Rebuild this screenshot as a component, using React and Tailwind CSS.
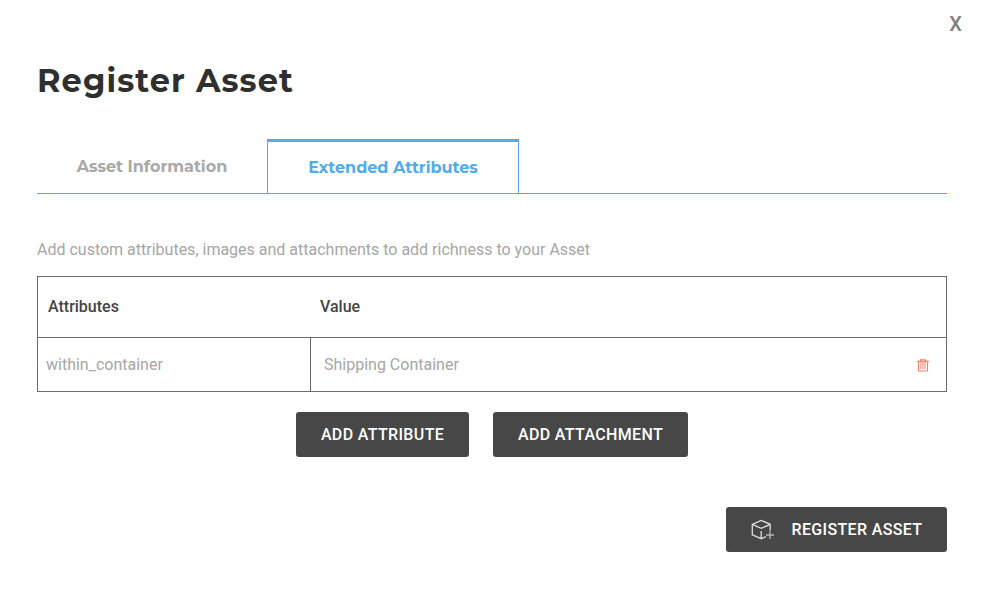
function TrashIcon() {
  return (
    <svg width="12" height="13" viewBox="0 0 12 13" fill="none" stroke="#f0806a" aria-hidden="true">
      <path d="M3.5 2V.8h5V2" strokeWidth="1.2" />
      <path d="M.3 2.6h11.4" strokeWidth="1.9" stroke="#f28c76" />
      <path d="M1.5 3.5v8.5h9V3.5" strokeWidth="1.1" />
      <path d="M3.9 4v6M6 4v6M8.1 4v6" strokeWidth="1" />
    </svg>
  );
}

function AddCubeIcon() {
  return (
    <svg width="24" height="22" viewBox="0 0 24 22" fill="none" stroke="#dedede" strokeWidth="1.3" aria-hidden="true">
      <path d="M19.2 11.5V5.3L10.2 1.4 1.3 5.3v10.5l8.9 3.9 4.8-2.1M1.3 5.3l8.9 4.1 9-4.1M10.2 12v7.7" />
      <path d="M19 12v8M15 16h8" stroke="#b8b8b8" />
    </svg>
  );
}

const buttonClass =
  "flex h-[45px] items-center justify-center rounded-[3px] bg-[#474747] text-base font-medium text-white";

export default function App() {
  return (
    <main className="flex h-[589px] w-[984px] flex-col bg-white px-[37px] font-['Roboto',sans-serif] text-[#444]">
      <header>
        <div className="-mr-[15px] flex h-[61px] justify-end pt-[9px]">
          <button className="h-[30px] text-xl leading-[30px] font-medium text-[#808080]" aria-label="Close">X</button>
        </div>
        <h1 className="w-fit font-['Montserrat',sans-serif] text-[32px] leading-10 font-bold tracking-[1.1px] text-[#2f2f2f]">
          Register Asset
        </h1>
      </header>

      <nav className="mt-[38px] flex h-[55px] border-b border-[#4facea] font-['Montserrat',sans-serif] text-base font-bold">
        <button className="w-[230px] pt-[2px] text-[#a8a8a8]">Asset Information</button>
        <button className="w-[252px] border-x border-t-[3px] border-[#4facea] text-[#4facea]">Extended Attributes</button>
      </nav>

      <p className="mt-11 h-[38px] text-base leading-6 text-[#a6a6a6]">
        Add custom attributes, images and attachments to add richness to your Asset
      </p>

      <section className="h-[116px] border border-[#6b6b6b] text-base">
        <div className="flex h-[61px] items-center border-b border-[#6b6b6b] font-medium">
          <div className="w-[272px] pl-[10px]">Attributes</div>
          <div className="pl-[10px]">Value</div>
        </div>
        <div className="flex h-[53px] text-[#a6a6a6]">
          <div className="flex w-[273px] items-center border-r border-[#6b6b6b] pl-2">within_container</div>
          <div className="flex flex-1 items-center justify-between pr-[17px] pl-[13px]">
            <span>Shipping Container</span>
            <button className="pt-px" aria-label="Delete attribute"><TrashIcon /></button>
          </div>
        </div>
      </section>

      <div className="mt-5 flex justify-center gap-6">
        <button className={`${buttonClass} w-[173px] tracking-[0.35px]`}>ADD ATTRIBUTE</button>
        <button className={`${buttonClass} w-[195px] tracking-[0.35px]`}>ADD ATTACHMENT</button>
      </div>

      <footer className="mt-[50px] flex justify-end">
        <button className={`${buttonClass} w-[221px] gap-[17px] tracking-[0.35px]`}>
          <AddCubeIcon />
          REGISTER ASSET
        </button>
      </footer>
    </main>
  );
}
